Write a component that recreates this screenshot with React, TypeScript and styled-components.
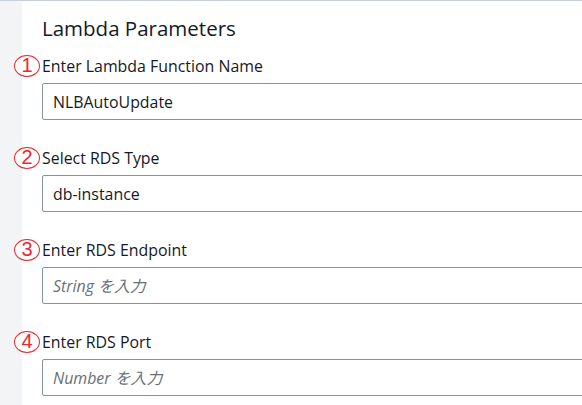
import styled, { createGlobalStyle } from "styled-components";

const GlobalStyle = createGlobalStyle`
  html, body {
    margin: 0;
    padding: 0;
    background: #ffffff;
  }
  body {
    font-family: "Open Sans", "Noto Sans", "Noto Sans CJK JP", sans-serif;
    color: #16191f;
  }
`;

const Page = styled.div`
  display: flex;
  min-height: 405px;
  border-top: 1px solid #c6d0dc;
  overflow: hidden;
`;

const Gutter = styled.div`
  flex: 0 0 22px;
  background-color: #f3f4f6;
`;

const Panel = styled.section`
  flex: 1;
  padding: 14px 0 0 20px;
  min-width: 0;
`;

const Heading = styled.h2`
  margin: 0 0 15px;
  font-size: 20.5px;
  line-height: 26px;
  font-weight: 400;
  color: #16191f;
`;

const Field = styled.div`
  display: flex;
  flex-direction: column;
  gap: 7px;
  margin-bottom: 28px;
`;

const LabelRow = styled.div`
  position: relative;
  font-size: 15.9px;
  line-height: 20px;
  color: #16191f;
`;

const Marker = styled.span`
  position: absolute;
  left: -28px;
  top: -1px;
  width: 26px;
  height: 22px;
  box-sizing: border-box;
  border: 1.5px solid #f0262c;
  border-radius: 50%;
  color: #f0262c;
  font-family: "Liberation Sans", sans-serif;
  font-size: 20px;
  line-height: 19px;
  text-align: center;
  background: rgba(255, 255, 255, 0.85);
`;

const Input = styled.input`
  box-sizing: border-box;
  width: 560px;
  height: 37px;
  padding: 0 10px;
  border: 1px solid #879596;
  border-radius: 2px;
  font-family: "Open Sans", "Noto Sans", "Noto Sans CJK JP", sans-serif;
  font-size: 15.9px;
  color: #16191f;
  background: #ffffff;
  outline: none;

  &::placeholder {
    color: #687078;
    font-style: italic;
  }
`;

const fields = [
  { n: "1", label: "Enter Lambda Function Name", value: "NLBAutoUpdate", placeholder: "" },
  { n: "2", label: "Select RDS Type", value: "db-instance", placeholder: "" },
  { n: "3", label: "Enter RDS Endpoint", value: "", placeholder: "String を入力" },
  { n: "4", label: "Enter RDS Port", value: "", placeholder: "Number を入力" },
];

export default function App() {
  return (
    <>
      <GlobalStyle />
      <Page>
        <Gutter />
        <Panel>
          <Heading>Lambda Parameters</Heading>
          {fields.map((f) => (
            <Field key={f.n}>
              <LabelRow>
                <Marker>{f.n}</Marker>
                {f.label}
              </LabelRow>
              <Input defaultValue={f.value} placeholder={f.placeholder} readOnly />
            </Field>
          ))}
        </Panel>
      </Page>
    </>
  );
}
